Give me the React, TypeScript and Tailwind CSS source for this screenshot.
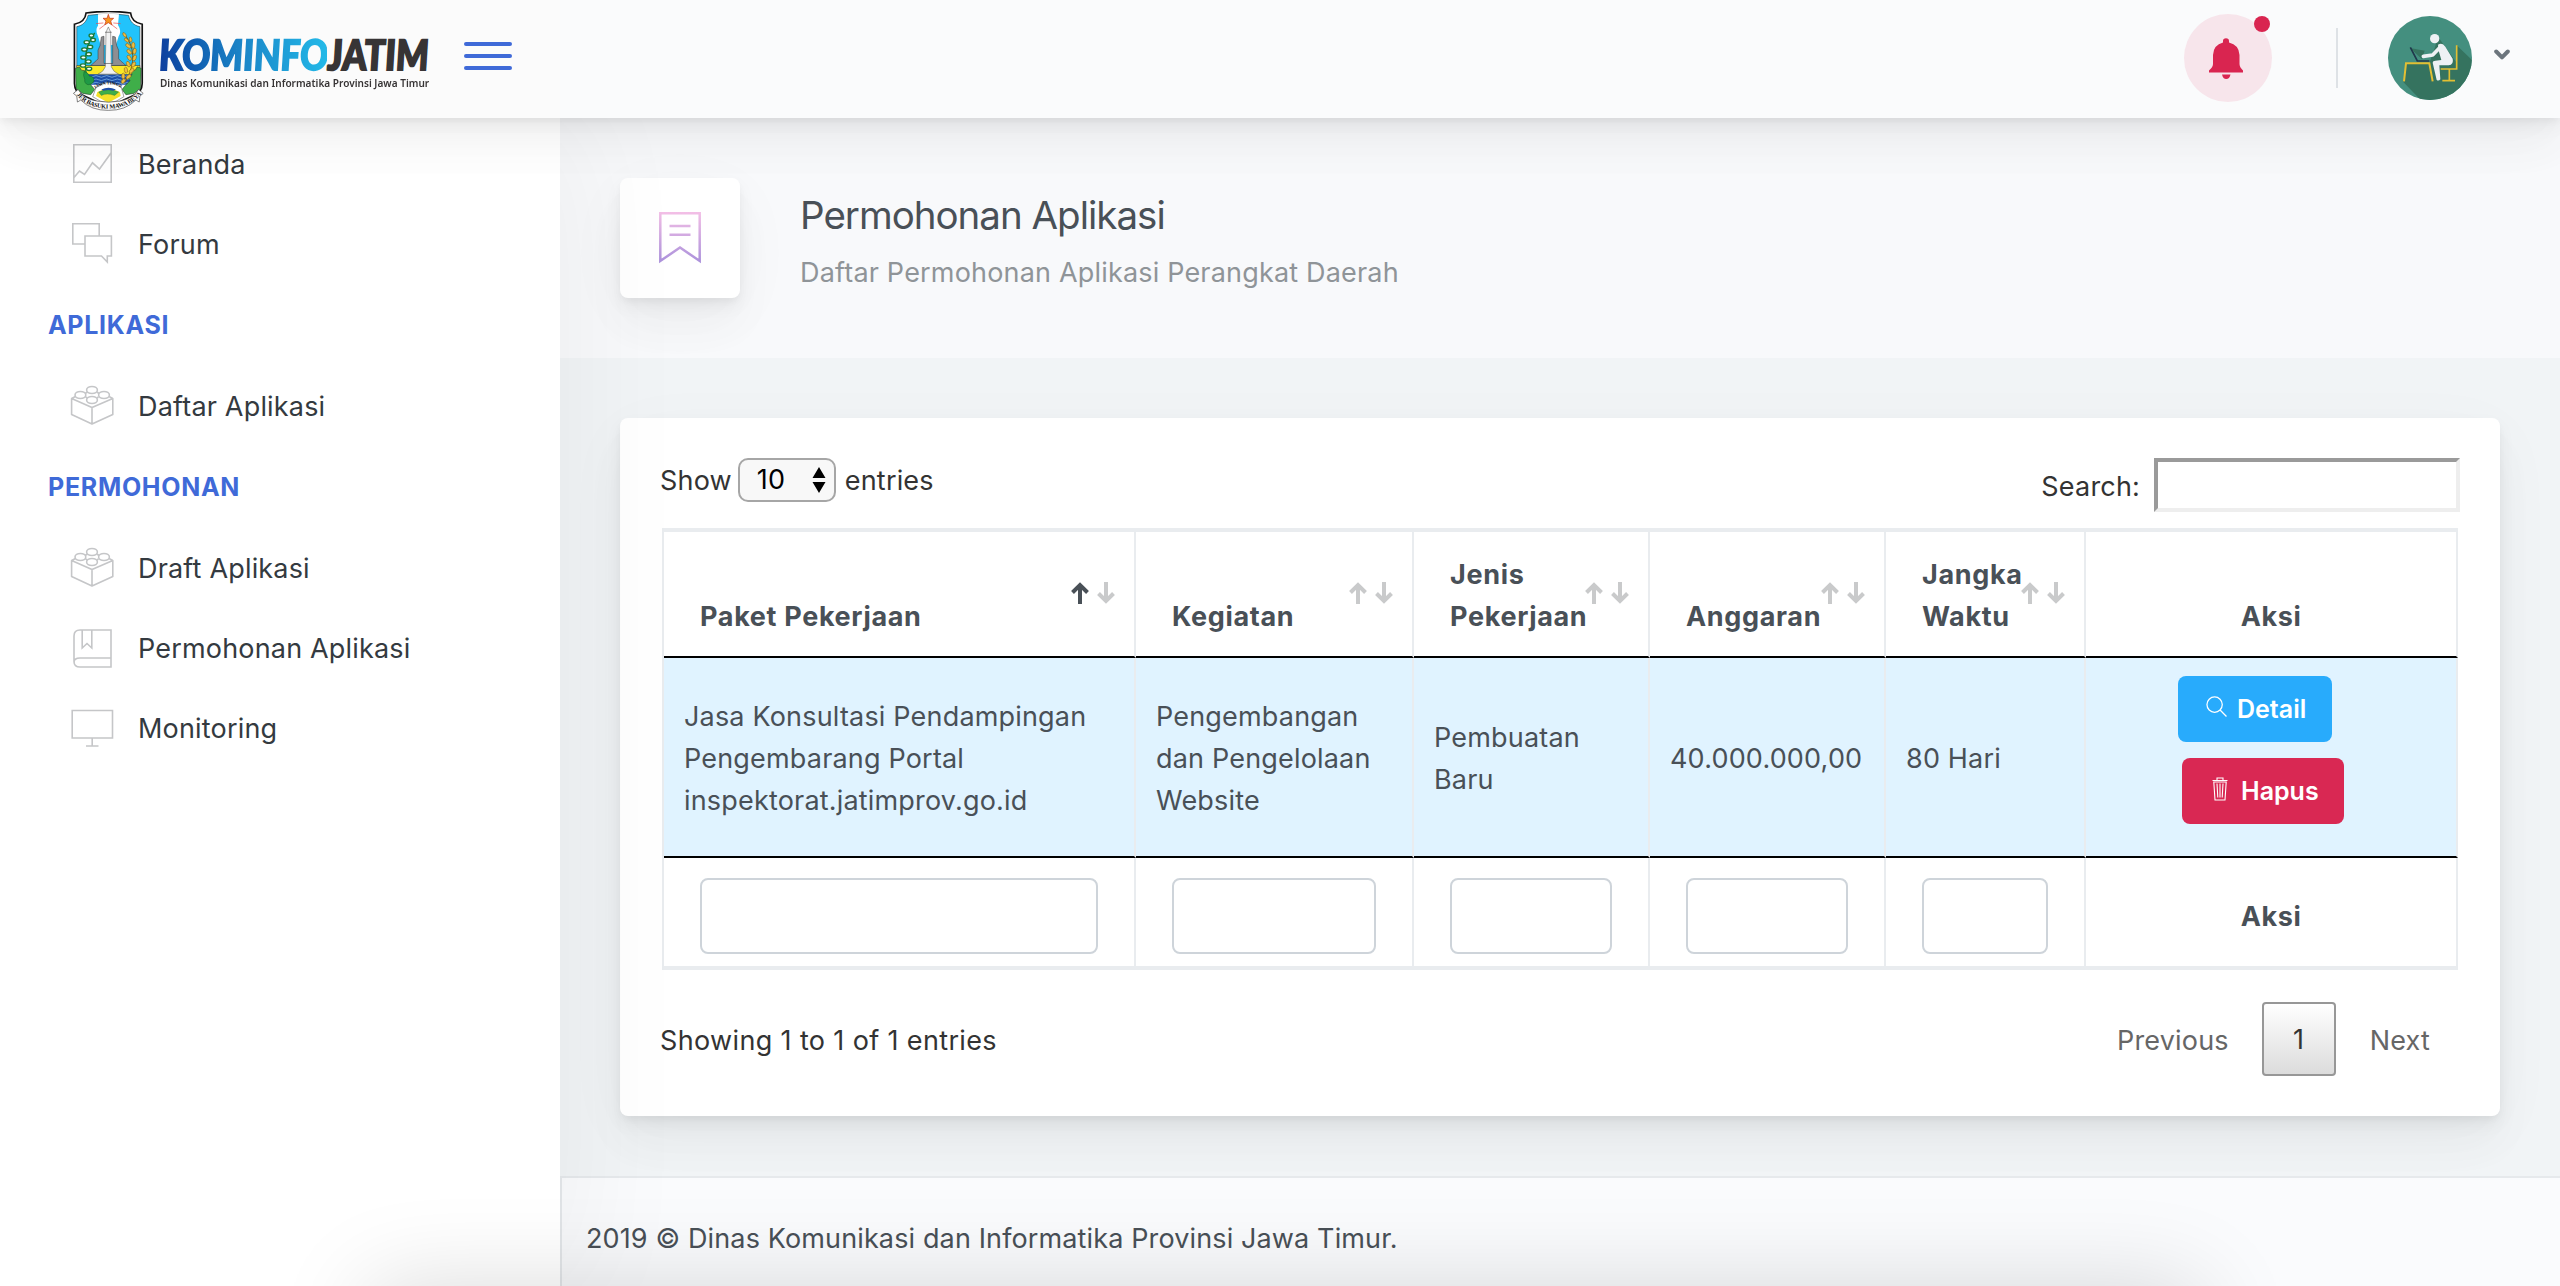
import React from "react";

const headShadow =
  "shadow-[0_15px_70px_rgba(4,9,20,0.03),0_30px_45px_rgba(4,9,20,0.03),0_8px_17px_rgba(4,9,20,0.05),0_4px_6px_rgba(4,9,20,0.03)]";

function Emblem() {
  return (
    <svg viewBox="36 32 216 304" className="h-[101px] w-[72px]" fill="none">
      <path
        d="M78 38 C120 32 170 32 212 38 C214 58 226 68 247 72 L247 250 Q246 276 225 284 L145 322 L65 284 Q44 276 43 250 L43 72 C64 68 76 58 78 38Z"
        fill="#fff"
        stroke="#111"
        strokeWidth="5"
      />
      <path d="M84 45 C122 40 168 40 206 45 C210 64 222 76 240 79 L240 200 H50 V79 C68 76 80 64 84 45Z" fill="#22c3fb" stroke="#222" strokeWidth="1.5" />
      <path d="M114 42 Q145 39 177 42 L174 74 Q186 92 176 108 L168 134 H122 L114 108 Q104 90 114 76Z" fill="#fff" />
      <path d="M50 196 H240 V225 H50Z" fill="#fbe826" stroke="#222" strokeWidth="1.5" />
      <path d="M66 222 H226 V254 H66Z" fill="#1d4fa8" />
      <path
        d="M68 229 q8 -5 16 0 t16 0 t16 0 t16 0 t16 0 t16 0 t16 0 t16 0 t16 0 M68 239 q8 -5 16 0 t16 0 t16 0 t16 0 t16 0 t16 0 t16 0 t16 0 t16 0 M68 249 q8 -5 16 0 t16 0 t16 0 t16 0 t16 0 t16 0 t16 0 t16 0 t16 0"
        stroke="#8ec5f2"
        strokeWidth="2"
      />
      <path d="M46 204 l12 -4 6 10 12 2 -2 12 12 8 -6 10 12 12 12 14 -12 16 -24 -4 -20 -14Z M244 204 l-12 -4 -6 10 -12 2 2 12 -12 8 6 10 -12 12 -12 14 12 16 24 -4 20 -14Z" fill="#3fae49" stroke="#222" strokeWidth="1.5" />
      <path d="M92 196 L108 182 L114 176 L114 150 L120 136 L124 110 L132 108 V190 H158 V108 L166 110 L170 136 L176 150 V176 L182 182 L198 196Z" fill="#8e8e92" stroke="#333" strokeWidth="1.5" />
      <path d="M138 96 L145 80 L152 96 L154 200 Q160 216 176 222 H114 Q130 216 136 200Z" fill="#f3f3f3" stroke="#555" strokeWidth="1.5" />
      <path d="M135 96 H155 M135 190 H156" stroke="#555" strokeWidth="2" />
      <path d="M145 42 l4 12 12 0 -9 8 4 12 -11 -7 -11 7 4 -12 -9 -8 12 0Z" fill="#f7941d" stroke="#c4301c" strokeWidth="2" />
      <path d="M108 70 L130 68 M182 70 L160 68 M118 86 L134 74 M172 86 L156 74" stroke="#e8484a" strokeWidth="2" />
      <path d="M104 98 Q60 160 84 246" stroke="#1d7a36" strokeWidth="4" />
      <g fill="#fff" stroke="#1d7a36" strokeWidth="4">
        <ellipse cx="94" cy="106" rx="7" ry="5" />
        <ellipse cx="99" cy="119" rx="7" ry="5" />
        <ellipse cx="80" cy="126" rx="8" ry="5" />
        <ellipse cx="90" cy="140" rx="8" ry="5" />
        <ellipse cx="73" cy="148" rx="8" ry="5" />
        <ellipse cx="86" cy="162" rx="8" ry="5" />
        <ellipse cx="70" cy="172" rx="8" ry="5" />
        <ellipse cx="85" cy="184" rx="8" ry="5" />
        <ellipse cx="69" cy="196" rx="8" ry="5" />
        <ellipse cx="87" cy="206" rx="8" ry="5" />
      </g>
      <path d="M72 214 q12 2 16 14 q14 0 14 14 q-4 12 -18 12 q-12 -4 -10 -16 q-6 -12 -2 -24Z" fill="#1f9a45" stroke="#14602b" strokeWidth="1.5" />
      <path d="M190 98 Q244 160 196 246" stroke="#7a5a10" strokeWidth="3" />
      <g fill="#f0bd3f" stroke="#7a5a10" strokeWidth="1.5">
        <ellipse cx="194" cy="104" rx="4" ry="8" transform="rotate(-35 194 104)" />
        <ellipse cx="200" cy="120" rx="4" ry="8" transform="rotate(-50 200 120)" />
        <ellipse cx="212" cy="118" rx="4" ry="8" transform="rotate(-10 212 118)" />
        <ellipse cx="205" cy="137" rx="5" ry="9" transform="rotate(-50 205 137)" />
        <ellipse cx="220" cy="135" rx="5" ry="9" />
        <ellipse cx="208" cy="155" rx="5" ry="9" transform="rotate(-45 208 155)" />
        <ellipse cx="224" cy="153" rx="5" ry="9" transform="rotate(10 224 153)" />
        <ellipse cx="208" cy="173" rx="5" ry="9" transform="rotate(-35 208 173)" />
        <ellipse cx="224" cy="173" rx="5" ry="9" transform="rotate(20 224 173)" />
        <ellipse cx="205" cy="192" rx="5" ry="9" transform="rotate(-25 205 192)" />
        <ellipse cx="221" cy="193" rx="5" ry="9" transform="rotate(30 221 193)" />
        <ellipse cx="198" cy="210" rx="5" ry="9" transform="rotate(-10 198 210)" />
        <ellipse cx="215" cy="212" rx="5" ry="9" transform="rotate(45 215 212)" />
        <ellipse cx="190" cy="228" rx="5" ry="9" />
        <ellipse cx="206" cy="230" rx="5" ry="9" transform="rotate(50 206 230)" />
        <ellipse cx="190" cy="243" rx="5" ry="8" transform="rotate(40 190 243)" />
      </g>
      <path d="M108 262 Q145 232 184 262 L192 290 Q145 326 98 290Z" fill="#fff" stroke="#444" strokeWidth="1.5" />
      <path d="M112 276 Q145 258 180 276 L182 288 L145 308 L108 288Z" fill="#f4e02a" />
      <path d="M116 276 Q145 262 176 276 L164 286 Q140 278 124 286Z" fill="#3fae49" stroke="#14602b" strokeWidth="1" />
      <path d="M124 268 Q145 258 168 268 L160 272 Q145 267 130 272Z" fill="#1d4fa8" />
      <path id="jt" d="M105 267 Q145 238 189 267" />
      <text fontFamily="Liberation Serif" fontWeight="700" fontSize="13" fill="#111">
        <textPath href="#jt" textLength="84">JAWA TIMUR</textPath>
      </text>
      <path
        d="M40 280 L54 268 Q70 296 110 303 Q145 310 182 303 Q222 294 236 268 L250 280 L240 288 L238 306 L228 300 Q196 332 145 331 Q94 332 62 300 L52 306 L50 288Z"
        fill="#fff"
        stroke="#444"
        strokeWidth="2"
      />
      <path id="jb" d="M49 284 Q82 325 145 326 Q210 325 246 280" />
      <text fontFamily="Liberation Serif" fontWeight="700" fontSize="19" fill="#111">
        <textPath href="#jb" textLength="222">JER BASUKI MAWA BEYA</textPath>
      </text>
    </svg>
  );
}

function Avatar() {
  return (
    <svg viewBox="0 0 252 252" className="h-[84px] w-[84px]">
      <defs>
        <clipPath id="av">
          <circle cx="126" cy="126" r="126" />
        </clipPath>
      </defs>
      <g clipPath="url(#av)">
        <rect width="252" height="252" fill="#448f7f" />
        <path d="M46 198 L98 252 H252 V132 L206 88 V140 L150 62 L136 110 L124 140 H54Z" fill="#35735f" />
        <path d="M66 96 L102 130 L110 104Z" fill="#35735f" />
        <path d="M48 196 L54 142 H124 L134 196" fill="none" stroke="#e2bf33" strokeWidth="6" />
        <path d="M206 88 V159 H158 M184 160 V193 M163 194 H201" fill="none" stroke="#e2bf33" strokeWidth="5" />
        <path d="M67 94 L88 135 H124" fill="none" stroke="#20384c" strokeWidth="5" />
        <circle cx="140" cy="68" r="14" fill="#eef1f4" />
        <path d="M106 121 L134 117 L160 90" fill="none" stroke="#eef1f4" strokeWidth="11" strokeLinecap="round" strokeLinejoin="round" />
        <path d="M150 86 Q163 78 172 92 L194 128 Q198 146 182 148 L154 148 L157 190 Q152 196 146 192 L134 140 Q134 134 142 134 L160 132 L152 104Z" fill="#eef1f4" />
      </g>
    </svg>
  );
}

const ico = "h-[48px] w-[48px] shrink-0";
function ChartIcon() {
  return (
    <svg viewBox="0 0 48 48" className={ico} fill="none" stroke="#c5c6c8" strokeWidth="1.6">
      <path d="M5.8 5.8H43.2V43.2H5.8Z M6 38.5L11.5 32L16.5 35.5L24.5 23.8L31.5 30L43 14" />
    </svg>
  );
}
function ChatIcon() {
  return (
    <svg viewBox="0 0 48 48" className={ico} fill="none" stroke="#c5c6c8" strokeWidth="1.6">
      <path d="M17 25H4.8V4.8H31.2V17 M17 17H43.4V37H39.3V43L33.5 37H17Z" />
    </svg>
  );
}
function BrickIcon() {
  return (
    <svg viewBox="0 0 48 48" className={ico} fill="none" stroke="#c5c6c8" strokeWidth="1.6" strokeLinejoin="round">
      <path d="M3.6 17.5V33.5L24 43L44.8 33.5V17.5L24 26.5L3.6 17.5L7.5 15.5M24 26.5V43M44.8 17.5L41 15.5M17 12.5L19.5 11M31 12.5L29 11M17.5 16L19.5 17M30.5 16L29 17" />
      <ellipse cx="24" cy="9" rx="5.4" ry="3.5" />
      <ellipse cx="12.4" cy="14" rx="5.4" ry="3.5" />
      <ellipse cx="36" cy="14" rx="5.4" ry="3.5" />
      <ellipse cx="24" cy="19" rx="5.4" ry="3.5" />
    </svg>
  );
}
function BookIcon() {
  return (
    <svg viewBox="0 0 48 48" className={ico} fill="none" stroke="#c5c6c8" strokeWidth="1.6">
      <path d="M43 35V7H12Q6 7 6 13V38.500Q6 44 12 44H43V35H12Q6 35 6 39.500 M14.200 7V25L19 20.500L23.800 25V7" />
    </svg>
  );
}
function MonitorIcon() {
  return (
    <svg viewBox="0 0 48 48" className={ico} fill="none" stroke="#c5c6c8" strokeWidth="1.6">
      <path d="M4.200 7.500H44.500V35H4.200Z M24.200 35V43 M18 43H30.500" />
    </svg>
  );
}

function NavItem({ icon, children }: { icon: React.ReactNode; children: React.ReactNode }) {
  return (
    <div className="flex h-[80px] items-center pl-[68px]">
      {icon}
      <span className="ml-[22px] pt-[3px] text-[27px] tracking-[0.180px] text-[#343a40]">{children}</span>
    </div>
  );
}
function NavHeading({ children }: { children: React.ReactNode }) {
  return <div className="flex h-[82px] items-center pl-[48px] pt-px text-[25px] font-bold tracking-[0.700px] text-[#3f6ad8]">{children}</div>;
}

function Sort({ up = false }: { up?: boolean }) {
  return (
    <svg viewBox="0 0 44 22" className="absolute right-[19px] top-[50px] h-[22px] w-[44px]" fill="none" strokeWidth="4">
      <path d="M9 22V3 M1.500 10.500L9 3L16.500 10.500" stroke={up ? "#495057" : "#c9cacb"} />
      <path d="M35 0V19 M27.500 11.500L35 19L42.500 11.500" stroke="#c9cacb" />
    </svg>
  );
}

const cols = "grid grid-cols-[472px_278px_236px_236px_200px_372px]";
const line = "border-r-2 border-r-[#e9ecef]";

function Head({ children, up }: { children: React.ReactNode; up?: boolean }) {
  return (
    <div className={`relative flex items-end border-b-2 border-b-black pb-[18px] pl-[36px] font-bold tracking-[0.660px] ${line}`}>
      <div>{children}</div>
      <Sort up={up} />
    </div>
  );
}
function Cell({ children }: { children: React.ReactNode }) {
  return <div className={`flex items-center whitespace-nowrap border-b-2 border-b-black pl-[20px] pt-[4px] ${line}`}>{children}</div>;
}

export default function App() {
  return (
    <div className="relative flex h-[1286px] w-[2560px] flex-col overflow-hidden bg-[#f1f4f6] font-['Inter',sans-serif] text-[27px] leading-[42px] tracking-[0.180px] text-[#495057]">
      <header className={`relative z-30 flex h-[118px] shrink-0 items-center bg-[#fafbfc] ${headShadow}`}>
        <div className="flex h-full w-[560px] items-center bg-[#fbfbfb] pl-[72px]">
          <div className="mt-[4px]"><Emblem /></div>
          <div className="ml-[16px] mt-[13px] h-[64px] w-[272px] whitespace-nowrap tracking-normal">
            <div className="h-[42px] w-fit origin-bottom-left scale-x-[0.885] skew-x-[3deg] font-['Lato',sans-serif] text-[42px] font-black italic leading-[40px]">
              <span className="bg-gradient-to-r from-[#0f3f9e] via-[#1c86c8] to-[#23b9e8] bg-clip-text text-transparent [-webkit-text-stroke:1.800px_transparent]">KOMINFO</span>
              <span className="text-[#373435] [-webkit-text-stroke:1.800px_#373435]">JATIM</span>
            </div>
            <div className="w-fit origin-left scale-x-[0.89] font-['Noto_Sans',sans-serif] text-[11.300px] font-semibold leading-[14px] text-[#373435]">
              Dinas Komunikasi dan Informatika Provinsi Jawa Timur
            </div>
          </div>
          <div className="ml-[32px] mt-[-6px] flex w-[48px] flex-col gap-[8px]">
            <i className="h-[4px] rounded-[2px] bg-[#3f6ad8]" />
            <i className="h-[4px] rounded-[2px] bg-[#3f6ad8]" />
            <i className="h-[4px] rounded-[2px] bg-[#3f6ad8]" />
          </div>
        </div>
        <div className="ml-auto flex items-center pb-[2px] pr-[50px]">
          <div className="relative flex h-[88px] w-[88px] items-center justify-center rounded-full bg-[#f7e5eb]">
            <svg viewBox="0 0 34 41" className="mr-[4px] h-[41px] w-[34px]" fill="#d92550">
              <path d="M14 3 Q14 0.200 17 0.200 Q20 0.200 20 3 L20 4.600 Q30 7 30.500 17 V26 Q30.500 29 34 32.500 V34.600 H0 V32.500 Q4 29 4 26 V17 Q4.500 7 14 4.600Z" />
              <path d="M13 36.500H21.500Q20.500 41 17.200 41Q14 41 13 36.500Z" />
            </svg>
            <i className="absolute left-[70px] top-[2px] h-[16px] w-[16px] rounded-full bg-[#d92550]" />
          </div>
          <i className="ml-[64px] h-[60px] w-[2px] bg-[#dee2e6]" />
          <div className="ml-[50px]"><Avatar /></div>
          <svg viewBox="0 0 16 11" className="ml-[22px] mt-[-7px] h-[11px] w-[16px]" fill="none" stroke="#6c757d" strokeWidth="4" strokeLinecap="round" strokeLinejoin="round">
            <path d="M2.200 2.500L8 8.300L13.800 2.500" />
          </svg>
        </div>
      </header>

      <div className="flex min-h-0 flex-1">
        <aside className="relative z-20 w-[560px] shrink-0 bg-white pt-[5px] shadow-[14px_0_120px_rgba(0,0,0,0.05)]">
          <NavItem icon={<ChartIcon />}>Beranda</NavItem>
          <NavItem icon={<ChatIcon />}>Forum</NavItem>
          <NavHeading>APLIKASI</NavHeading>
          <NavItem icon={<BrickIcon />}>Daftar Aplikasi</NavItem>
          <NavHeading>PERMOHONAN</NavHeading>
          <NavItem icon={<BrickIcon />}>Draft Aplikasi</NavItem>
          <NavItem icon={<BookIcon />}>Permohonan Aplikasi</NavItem>
          <NavItem icon={<MonitorIcon />}>Monitoring</NavItem>
        </aside>

        <main className="flex min-w-0 flex-1 flex-col">
          <section className="flex h-[240px] shrink-0 items-center bg-[#f8f9fb] pl-[60px]">
            <div className={`flex h-[120px] w-[120px] items-center justify-center rounded-[8px] bg-white ${headShadow}`}>
              <svg viewBox="0 0 42 52" className="h-[52px] w-[42px]" fill="none" stroke="url(#bm)" strokeWidth="2.500">
                <defs>
                  <linearGradient id="bm" gradientUnits="userSpaceOnUse" x1="0" y1="0" x2="0" y2="52">
                    <stop offset="0" stopColor="#f3bfe6" />
                    <stop offset="1" stopColor="#a990db" />
                  </linearGradient>
                </defs>
                <path d="M1.300 1.300H40.700V49L21 35.500L1.300 49Z M10.500 14H31.500 M10.500 22.800H31.500" />
              </svg>
            </div>
            <div className="ml-[60px] pt-[3px]">
              <h1 className="text-[38.500px] leading-[58px] tracking-[-1px]">Permohonan Aplikasi</h1>
              <p className="mt-[6px] pt-[2px] leading-[42px] text-[#8f9498]">Daftar Permohonan Aplikasi Perangkat Daerah</p>
            </div>
          </section>

          <section className={`mx-[60px] mt-[60px] flex h-[698px] shrink-0 flex-col rounded-[8px] bg-white pl-[40px] pr-[40px] pt-[40px] ${headShadow}`}>
            <div className="flex h-[70px] items-start justify-between text-[#333]">
              <div className="flex h-[44px] items-center">
                <span className="pt-px">Show</span>
                <div className="ml-[6px] mr-[9px] flex h-[44px] w-[98px] items-center rounded-[10px] border-2 border-[#a6a6a6] bg-[#f8f8f8] pl-[17px] text-black">
                  10
                  <svg viewBox="0 0 14 26" className="ml-auto mr-[8px] h-[26px] w-[14px]">
                    <path d="M7 0L13.500 11H0.500Z M7 26L13.500 15H0.500Z" />
                  </svg>
                </div>
                <span className="pt-px">entries</span>
              </div>
              <div className="flex items-center">
                <span className="pt-[3px]">Search:</span>
                <div className="ml-[14px] h-[54px] w-[306px] border-4 border-b-[#eee] border-l-[#9a9a9a] border-r-[#eee] border-t-[#9a9a9a] bg-white" />
              </div>
            </div>

            <div className="ml-[2px] w-[1796px] border-y-4 border-l-2 border-[#e9ecef]">
              <div className={`${cols} h-[126px]`}>
                <Head up>Paket Pekerjaan</Head>
                <Head>Kegiatan</Head>
                <Head>Jenis<br />Pekerjaan</Head>
                <Head>Anggaran</Head>
                <Head>Jangka<br />Waktu</Head>
                <div className={`flex items-end justify-center border-b-2 border-b-black pb-[18px] font-bold tracking-[0.600px] ${line}`}>Aksi</div>
              </div>
              <div className={`${cols} h-[200px] bg-[#e0f3ff]`}>
                <Cell>Jasa Konsultasi Pendampingan<br />Pengembarang Portal<br />inspektorat.jatimprov.go.id</Cell>
                <Cell>Pengembangan<br />dan Pengelolaan<br />Website</Cell>
                <Cell>Pembuatan<br />Baru</Cell>
                <Cell>40.000.000,00</Cell>
                <Cell>80 Hari</Cell>
                <div className={`flex flex-col gap-[16px] border-b-2 border-b-black pt-[18px] text-[25px] font-semibold tracking-normal text-white ${line}`}>
                  <button className="ml-[92px] flex h-[66px] w-[154px] items-center rounded-[8px] bg-[#28abfc] pl-[28px]">
                    <svg viewBox="0 0 20 20" className="mr-[10px] mt-[-5px] h-[21px] w-[21px]" fill="none" stroke="#fff" strokeWidth="1.200">
                      <circle cx="8.200" cy="8.200" r="7.300" />
                      <path d="M13.400 13.400L19.500 19.500" />
                    </svg>
                    Detail
                  </button>
                  <button className="ml-[96px] flex h-[66px] w-[162px] items-center rounded-[8px] bg-[#d92853] pl-[30px]">
                    <svg viewBox="0 0 16 24" className="mr-[13px] mt-[-4px] h-[24px] w-[16px]" fill="none" stroke="#fff" strokeWidth="1.100">
                      <path d="M0.500 3.500H15.500 M5 3.500V1H11V3.500 M1.800 5L3 23H13L14.200 5Z M5 6.500L5.800 20.500 M8 6.500V20.500 M11 6.500L10.200 20.500" />
                    </svg>
                    Hapus
                  </button>
                </div>
              </div>
              <div className={`${cols} h-[108px]`}>
                {[0, 1, 2, 3, 4].map((i) => (
                  <div key={i} className={`px-[36px] pt-[20px] ${line}`}>
                    <div className="h-[76px] rounded-[8px] border-2 border-[#ced4da] bg-white" />
                  </div>
                ))}
                <div className={`flex items-center justify-center pt-[10px] font-bold tracking-[0.600px] ${line}`}>Aksi</div>
              </div>
            </div>

            <div className="mt-[32px] flex h-[74px] items-center pr-[30px] text-[#333]">
              <span className="pt-[3px] tracking-[0.360px]">Showing 1 to 1 of 1 entries</span>
              <span className="ml-auto pt-[3px] text-[#666]">Previous</span>
              <span className="ml-[33px] mr-[34px] flex h-[74px] w-[74px] items-center justify-center rounded-[4px] border-2 border-[#979797] bg-gradient-to-b from-white to-[#dcdcdc] pt-[2px]">1</span>
              <span className="pt-[3px] text-[#666]">Next</span>
            </div>
          </section>

          <footer className="mt-auto h-[110px] shrink-0 border-l-2 border-t-2 border-[#e6e9ec] bg-[#fafbfd] pl-[24px] pt-[40px] tracking-[0.130px]">
            2019 © Dinas Komunikasi dan Informatika Provinsi Jawa Timur.
          </footer>
        </main>
      </div>
      <div className="pointer-events-none absolute left-[370px] top-[1287px] z-40 h-[200px] w-[1830px] shadow-[0_0_95px_rgba(0,0,0,0.15)]" />
    </div>
  );
}
